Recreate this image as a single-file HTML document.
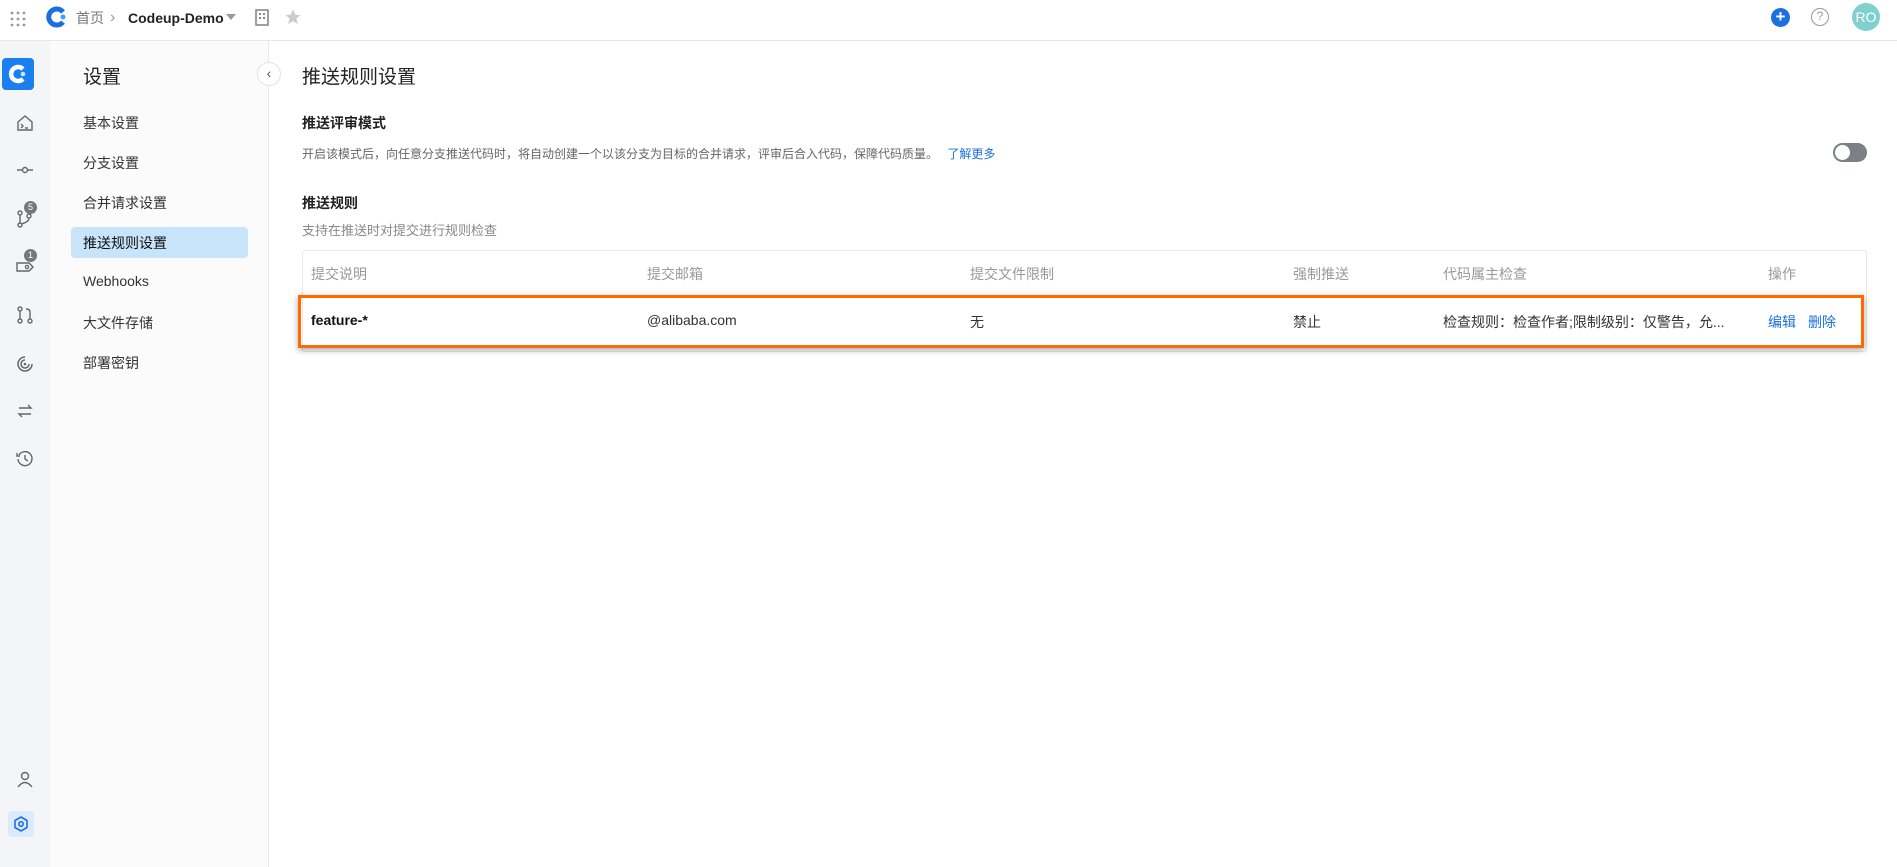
<!DOCTYPE html>
<html><head><meta charset="utf-8"><style>
*{margin:0;padding:0;box-sizing:border-box}
body{width:1897px;height:867px;position:relative;overflow:hidden;background:#fff;font-family:"Liberation Sans","Noto Sans CJK SC",sans-serif;color:#333;font-size:14px}
.a{position:absolute;white-space:nowrap}
.top{position:absolute;left:0;top:0;width:1897px;height:41px;border-bottom:1px solid #e8e8e8;background:#fff}
.rail{position:absolute;left:0;top:41px;width:50px;height:826px;background:#f4f5f7}
.nav{position:absolute;left:50px;top:41px;width:219px;height:826px;background:#fbfbfb;border-right:1px solid #e8e8e8}
.ic{position:absolute;left:15px;width:20px;height:20px}
.badge{position:absolute;width:13px;height:13px;border-radius:50%;background:#777;color:#fff;font-size:9px;text-align:center;line-height:13px}
.th{color:#999;font-size:14px;top:264px}
.td{font-size:14px;top:312px;color:#333}
.tb{top:8px;line-height:20px}
</style></head><body>
<div class="top">
 <svg class="a" style="left:10px;top:11px" width="16" height="16"><g fill="#999"><circle cx="2" cy="2" r="1.4"/><circle cx="8" cy="2" r="1.4"/><circle cx="14" cy="2" r="1.4"/><circle cx="2" cy="8" r="1.4"/><circle cx="8" cy="8" r="1.4"/><circle cx="14" cy="8" r="1.4"/><circle cx="2" cy="14" r="1.4"/><circle cx="8" cy="14" r="1.4"/><circle cx="14" cy="14" r="1.4"/></g></svg>
 <svg class="a" style="left:46px;top:6px" width="22" height="22"><path d="M17 6 A8 8 0 1 0 17 16" stroke="#1b6fe0" stroke-width="5" fill="none"/><circle cx="17" cy="11" r="2.5" fill="#3fa0ff"/></svg>
 <div class="a tb" style="left:76px;font-size:14px;color:#777">首页</div>
 <div class="a tb" style="left:110px;font-size:16px;color:#999">›</div>
 <div class="a tb" style="left:128px;font-size:14px;font-weight:bold;color:#222">Codeup-Demo</div>
 <div class="a" style="left:226px;top:14px;border:5px solid transparent;border-top:6px solid #999"></div>
 <svg class="a" style="left:255px;top:9px" width="14" height="17"><rect x="1" y="1" width="12" height="15" fill="none" stroke="#888" stroke-width="1.6"/><rect x="4" y="4" width="2" height="2" fill="#888"/><rect x="8" y="4" width="2" height="2" fill="#888"/><rect x="4" y="8" width="2" height="2" fill="#888"/><rect x="8" y="8" width="2" height="2" fill="#888"/></svg>
 <svg class="a" style="left:284px;top:8px" width="18" height="18" viewBox="0 0 24 24"><path d="M12 2 L15 9 L22 9.5 L16.5 14 L18.5 21.5 L12 17.5 L5.5 21.5 L7.5 14 L2 9.5 L9 9Z" fill="#ccc"/></svg>
 <div class="a" style="left:1771px;top:8px;width:19px;height:19px;border-radius:50%;background:#1b6fe0;color:#fff;text-align:center;line-height:18px;font-size:17px;font-weight:bold">+</div>
 <div class="a" style="left:1811px;top:8px;width:18px;height:18px;border-radius:50%;border:1.5px solid #999;color:#999;text-align:center;line-height:15px;font-size:12px">?</div>
 <div class="a" style="left:1852px;top:3px;width:28px;height:28px;border-radius:50%;background:#7fd0cf;color:#fff;text-align:center;line-height:28px;font-size:14px">RO</div>
</div>
<div class="rail">
 <div class="a" style="left:2px;top:17px;width:32px;height:32px;border-radius:4px;background:#1b7fef"></div>
 <svg class="a" style="left:7px;top:22px" width="22" height="22"><path d="M16 6 A7 7 0 1 0 16 16" stroke="#fff" stroke-width="4.5" fill="none"/><circle cx="16" cy="11" r="2.3" fill="#cfe6ff"/></svg>
 <svg class="ic" style="top:72px" viewBox="0 0 20 20"><path d="M3 9 L10 3 L17 9 V17 H3Z M6 11 l2 2 -2 2 M10 15 h3" fill="none" stroke="#666" stroke-width="1.4"/></svg>
 <svg class="ic" style="top:119px" viewBox="0 0 20 20"><path d="M2 10 H7 M13 10 H18" stroke="#666" stroke-width="1.4"/><circle cx="10" cy="10" r="2.5" fill="none" stroke="#666" stroke-width="1.4"/></svg>
 <svg class="ic" style="top:168px" viewBox="0 0 20 20"><circle cx="5" cy="16" r="2" fill="none" stroke="#666" stroke-width="1.4"/><circle cx="5" cy="4" r="2" fill="none" stroke="#666" stroke-width="1.4"/><circle cx="14" cy="7" r="2" fill="none" stroke="#666" stroke-width="1.4"/><path d="M5 6 V14 M14 9 Q14 13 6 15" fill="none" stroke="#666" stroke-width="1.4"/></svg>
 <div class="badge" style="left:24px;top:160px">5</div>
 <svg class="ic" style="top:216px" viewBox="0 0 20 20"><path d="M2 6 H14 L18 10 L14 14 H2Z" fill="none" stroke="#666" stroke-width="1.4"/><circle cx="12" cy="10" r="1.6" fill="none" stroke="#666" stroke-width="1.3"/></svg>
 <div class="badge" style="left:24px;top:208px">1</div>
 <svg class="ic" style="top:264px" viewBox="0 0 20 20"><circle cx="5" cy="4" r="2" fill="none" stroke="#666" stroke-width="1.4"/><circle cx="5" cy="16" r="2" fill="none" stroke="#666" stroke-width="1.4"/><circle cx="15" cy="16" r="2" fill="none" stroke="#666" stroke-width="1.4"/><path d="M5 6 V14 M15 14 V7 Q15 4 11 4" fill="none" stroke="#666" stroke-width="1.4"/></svg>
 <svg class="ic" style="top:313px" viewBox="0 0 20 20"><path d="M10 3 A7 7 0 1 0 17 10 M10 6 A4 4 0 1 0 14 10" fill="none" stroke="#666" stroke-width="1.5"/><circle cx="10" cy="10" r="1.3" fill="#666"/></svg>
 <svg class="ic" style="top:360px" viewBox="0 0 20 20"><path d="M4 7 H16 L13 4 M16 13 H4 L7 16" fill="none" stroke="#666" stroke-width="1.4"/></svg>
 <svg class="ic" style="top:408px" viewBox="0 0 20 20"><path d="M4 6 A7 7 0 1 1 3 10 M2 4 V7 H5 M10 6 V10 L13 12" fill="none" stroke="#666" stroke-width="1.4"/></svg>
 <svg class="ic" style="top:728px" viewBox="0 0 20 20"><circle cx="10" cy="7" r="3.5" fill="none" stroke="#666" stroke-width="1.4"/><path d="M3 18 Q10 9 17 18" fill="none" stroke="#666" stroke-width="1.4"/></svg>
 <div class="a" style="left:8px;top:770px;width:26px;height:26px;border-radius:4px;background:#dbeafc"></div>
 <svg class="ic" style="left:11px;top:773px" viewBox="0 0 20 20"><path d="M10 3 L16 6.5 V13.5 L10 17 L4 13.5 V6.5Z" fill="none" stroke="#1b6fe0" stroke-width="1.6"/><circle cx="10" cy="10" r="2.2" fill="none" stroke="#1b6fe0" stroke-width="1.6"/></svg>
</div>
<div class="nav">
 <div class="a" style="left:33px;top:21px;font-size:19px;color:#222">设置</div>
 <div class="a" style="left:21px;top:186px;width:177px;height:31px;border-radius:4px;background:#c7e4fb"></div>
 <div class="a" style="left:33px;top:72px;font-size:14px">基本设置</div>
 <div class="a" style="left:33px;top:112px;font-size:14px">分支设置</div>
 <div class="a" style="left:33px;top:152px;font-size:14px">合并请求设置</div>
 <div class="a" style="left:33px;top:192px;font-size:14px;color:#111">推送规则设置</div>
 <div class="a" style="left:33px;top:232px;font-size:14px">Webhooks</div>
 <div class="a" style="left:33px;top:272px;font-size:14px">大文件存储</div>
 <div class="a" style="left:33px;top:312px;font-size:14px">部署密钥</div>
</div>
<div class="a" style="left:257px;top:62px;width:24px;height:24px;border-radius:50%;background:#fff;border:1px solid #e3e3e3;text-align:center;line-height:21px;font-size:14px;color:#555">‹</div>
<div class="a" style="left:302px;top:62px;font-size:19px;color:#222">推送规则设置</div>
<div class="a" style="left:302px;top:113px;font-size:14px;color:#222;font-weight:bold">推送评审模式</div>
<div class="a" style="left:302px;top:145px;font-size:12px;color:#666">开启该模式后，向任意分支推送代码时，将自动创建一个以该分支为目标的合并请求，评审后合入代码，保障代码质量。 <span style="color:#1b6fe0;margin-left:6px">了解更多</span></div>
<div class="a" style="left:1833px;top:143px;width:34px;height:19px;border-radius:10px;background:#7c7f85"></div>
<div class="a" style="left:1835px;top:145px;width:15px;height:15px;border-radius:50%;background:#fff"></div>
<div class="a" style="left:302px;top:193px;font-size:14px;color:#222;font-weight:bold">推送规则</div>
<div class="a" style="left:302px;top:220px;font-size:13px;color:#888">支持在推送时对提交进行规则检查</div>
<div class="a" style="left:302px;top:250px;width:1565px;height:102px;border:1px solid #e8e8e8;border-radius:3px"></div>
<div class="a th" style="left:311px">提交说明</div>
<div class="a th" style="left:647px">提交邮箱</div>
<div class="a th" style="left:970px">提交文件限制</div>
<div class="a th" style="left:1293px">强制推送</div>
<div class="a th" style="left:1443px">代码属主检查</div>
<div class="a th" style="left:1768px">操作</div>
<div class="a" style="left:298px;top:295px;width:1566px;height:53px;border:3px solid #ff6a00;box-shadow:0 2px 6px rgba(0,0,0,.35)"></div>
<div class="a td" style="left:311px;font-weight:bold;color:#111">feature-*</div>
<div class="a td" style="left:647px">@alibaba.com</div>
<div class="a td" style="left:970px">无</div>
<div class="a td" style="left:1293px">禁止</div>
<div class="a td" style="left:1443px">检查规则：检查作者;限制级别：仅警告，允...</div>
<div class="a td" style="left:1768px;color:#1b6fe0">编辑</div>
<div class="a td" style="left:1808px;color:#1b6fe0">删除</div>
</body></html>
